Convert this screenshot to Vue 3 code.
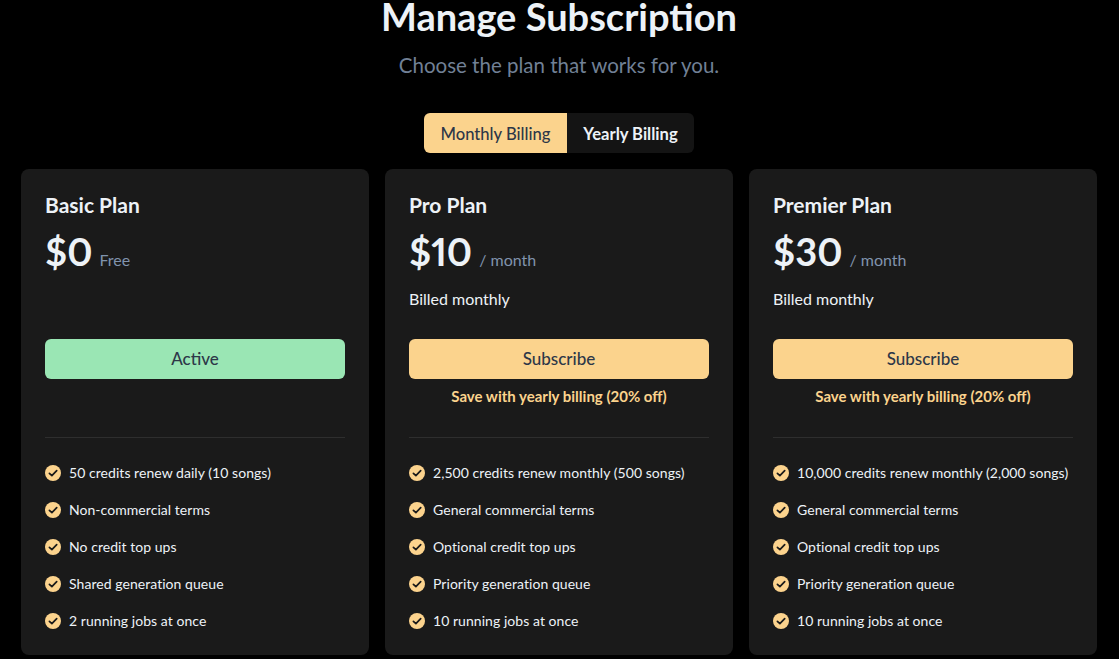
<script setup>
const plans = [
  { name: 'Basic Plan', price: '$0', unit: 'Free', billed: '', action: 'Active', active: true, save: '',
    features: ['50 credits renew daily (10 songs)', 'Non-commercial terms', 'No credit top ups', 'Shared generation queue', '2 running jobs at once'] },
  { name: 'Pro Plan', price: '$10', unit: '/ month', billed: 'Billed monthly', action: 'Subscribe', active: false, save: 'Save with yearly billing (20% off)',
    features: ['2,500 credits renew monthly (500 songs)', 'General commercial terms', 'Optional credit top ups', 'Priority generation queue', '10 running jobs at once'] },
  { name: 'Premier Plan', price: '$30', unit: '/ month', billed: 'Billed monthly', action: 'Subscribe', active: false, save: 'Save with yearly billing (20% off)',
    features: ['10,000 credits renew monthly (2,000 songs)', 'General commercial terms', 'Optional credit top ups', 'Priority generation queue', '10 running jobs at once'] },
]
</script>

<template>
  <div class="page">
    <h1 class="title">Manage Subscription</h1>
    <p class="subtitle">Choose the plan that works for you.</p>
    <div class="toggle">
      <button class="tab on">Monthly Billing</button>
      <button class="tab off">Yearly Billing</button>
    </div>
    <div class="cards">
      <section v-for="p in plans" :key="p.name" class="card">
        <h2 class="name">{{ p.name }}</h2>
        <div class="price-row">
          <span class="price">{{ p.price }}</span>
          <span class="unit">{{ p.unit }}</span>
        </div>
        <div class="billed">{{ p.billed }}</div>
        <button class="cta" :class="{ active: p.active }">{{ p.action }}</button>
        <div class="save">{{ p.save }}</div>
        <div class="rule"></div>
        <ul class="features">
          <li v-for="f in p.features" :key="f">
            <svg class="check" viewBox="0 0 16 16" width="16" height="16">
              <circle cx="8" cy="8" r="8" fill="#fcd38d" />
              <path d="M4.4 8.3l2.5 2.4 4.8-5" fill="none" stroke="#1a1a1a" stroke-width="1.7" stroke-linecap="round" stroke-linejoin="round" />
            </svg>
            <span class="label">{{ f }}</span>
          </li>
        </ul>
      </section>
    </div>
  </div>
</template>

<style>
html, body { margin: 0; background: #000; overflow: hidden; }
</style>

<style scoped>
.page {
  height: 659px;
  overflow: hidden;
  box-sizing: border-box;
  padding: 0 22px 0 21px;
  background: #000;
  font-family: Lato, "Noto Sans", sans-serif;
  color: #f0f0f0;
  display: flex;
  flex-direction: column;
  align-items: center;
}
.title {
  margin: -6px 0 0;
  font-size: 38px;
  line-height: 44px;
  font-weight: 700;
  color: #edf2f7;
}
.subtitle {
  margin: 13px 0 0;
  font-size: 20.5px;
  line-height: 28px;
  font-weight: 400;
  color: #718096;
}
.toggle {
  margin-top: 34px;
  display: flex;
  border-radius: 6px;
  overflow: hidden;
}
.tab {
  border: 0;
  height: 40px;
  width: 143px;
  padding: 2px 0 0;
  font: inherit;
  font-size: 16.6px;
  white-space: nowrap;
}
.tab.on { background: #fbd38d; color: #2d3748; font-weight: 500; }
.tab.off { background: #141414; color: #edf2f7; font-weight: 700; width: 127px; }
.cards {
  margin-top: 16px;
  align-self: stretch;
  display: grid;
  grid-template-columns: repeat(3, 1fr);
  gap: 16px;
}
.card {
  height: 486px;
  box-sizing: border-box;
  background: #1a1a1a;
  border-radius: 8px;
  padding: 24px;
}
.name {
  margin: 0;
  font-size: 21px;
  line-height: 24px;
  font-weight: 700;
  color: #edf2f7;
}
.price-row {
  margin-top: 10px;
  display: flex;
  align-items: baseline;
  gap: 7px;
  height: 48px;
}
.price {
  font-size: 38px;
  line-height: 48px;
  font-weight: 700;
  font-variant-numeric: proportional-nums;
  color: #edf2f7;
}
.unit { font-size: 16px; color: #8093ad; }
.billed {
  margin-top: 12px;
  height: 24px;
  font-size: 16px;
  line-height: 24px;
  color: #edf2f7;
}
.cta {
  display: block;
  margin-top: 28px;
  width: 100%;
  height: 40px;
  border: 0;
  padding: 0 0 2px;
  border-radius: 6px;
  background: #fbd38d;
  color: #2d3748;
  font: inherit;
  font-size: 17px;
  font-weight: 500;
}
.cta.active { background: #9ae6b4; }
.save {
  margin-top: 7px;
  height: 20px;
  text-align: center;
  font-size: 15px;
  line-height: 20px;
  font-weight: 700;
  color: #fbd38d;
}
.rule {
  margin-top: 31px;
  height: 1px;
  background: #2e2e2e;
}
.features {
  list-style: none;
  margin: 23px 0 0;
  padding: 0;
  display: flex;
  flex-direction: column;
  gap: 13px;
}
.features li {
  display: flex;
  align-items: center;
  gap: 8px;
  height: 24px;
  font-size: 14px;
  letter-spacing: 0.05px;
  white-space: nowrap;
  color: #edf2f7;
}
.label { padding-bottom: 2px; }
.check { flex: none; }
</style>
